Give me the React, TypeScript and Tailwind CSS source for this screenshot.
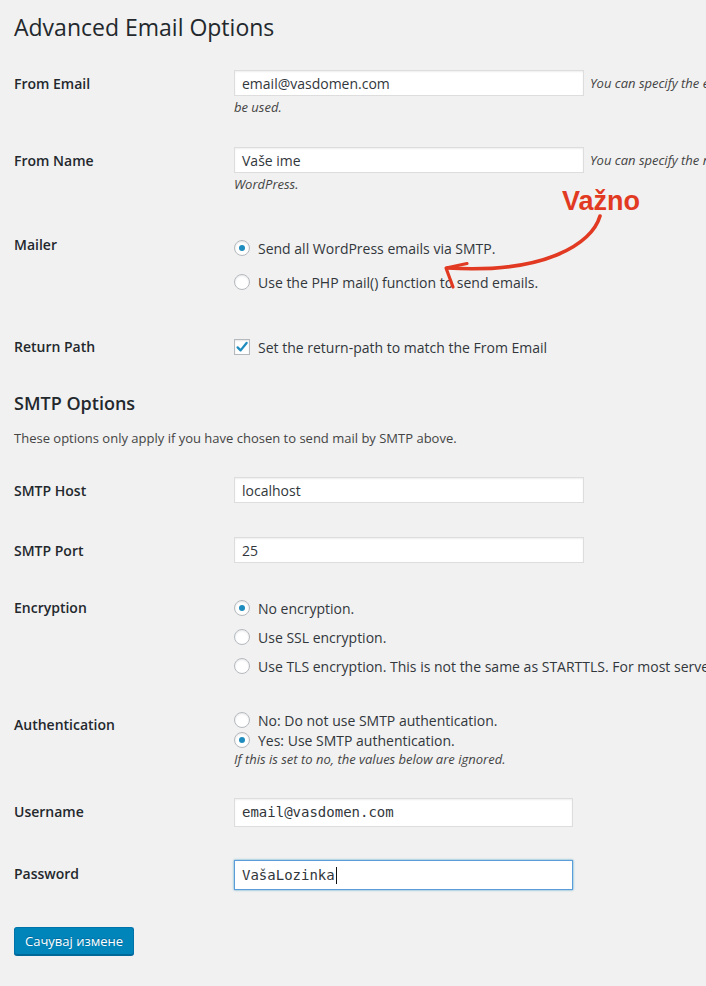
import type { ReactNode } from 'react';

// WP admin settings screen: Advanced Email Options / SMTP Options

const label =
  "w-[220px] shrink-0 text-[14px] leading-[20px] font-semibold text-[#23282d]";

function Row({
  name,
  pad = 'pt-0',
  className,
  children,
}: {
  name: string;
  pad?: string;
  className: string;
  children: ReactNode;
}) {
  return (
    <div className={`flex ${className}`}>
      <div className={`${label} ${pad}`}>{name}</div>
      <div className="min-w-0">{children}</div>
    </div>
  );
}

function TextInput({
  value,
  mono,
  focused,
  width = 'w-[350px]',
  height = 'h-[26px]',
}: {
  value: string;
  mono?: boolean;
  focused?: boolean;
  width?: string;
  height?: string;
}) {
  return (
    <div
      className={`${width} ${height} shrink-0 flex items-center bg-white px-[7px] border ${
        focused
          ? 'border-[#5b9dd9] shadow-[0_0_2px_rgba(30,140,190,0.8)]'
          : 'border-[#dddddd] shadow-[inset_0_1px_2px_rgba(0,0,0,0.07)]'
      } ${
        mono
          ? "font-['DejaVu_Sans_Mono',monospace] text-[14px]"
          : 'text-[14px]'
      } text-[#32373c] whitespace-nowrap`}
    >
      {value}
      {focused && <span className="ml-[1px] w-[1px] h-[17px] bg-[#111]" />}
    </div>
  );
}

function Radio({ checked, children }: { checked?: boolean; children: ReactNode }) {
  return (
    <div className="flex h-[20px] items-center whitespace-nowrap text-[14px] text-[#32373c]">
      <span className="mr-[8px] flex h-[16px] w-[16px] shrink-0 items-center justify-center rounded-full border border-[#b4b9be] bg-white shadow-[inset_0_1px_2px_rgba(0,0,0,0.1)]">
        {checked && <span className="h-[6px] w-[6px] rounded-full bg-[#1e8cbe]" />}
      </span>
      {children}
    </div>
  );
}

function Checkbox({ children }: { children: ReactNode }) {
  return (
    <div className="flex h-[20px] items-center whitespace-nowrap text-[14px] text-[#32373c]">
      <span className="mr-[8px] flex h-[16px] w-[16px] shrink-0 items-center justify-center border border-[#b4b9be] bg-white shadow-[inset_0_1px_2px_rgba(0,0,0,0.1)]">
        <svg width="14" height="14" viewBox="0 0 14 14">
          <path
            d="M2.6 7.4 L5.6 10.4 L11.6 3"
            fill="none"
            stroke="#1e8cbe"
            strokeWidth="2.3"
            strokeLinecap="round"
            strokeLinejoin="round"
          />
        </svg>
      </span>
      {children}
    </div>
  );
}

function Note({ children, className = '' }: { children: ReactNode; className?: string }) {
  return (
    <div className={`text-[13px] leading-[18px] italic text-[#444] whitespace-nowrap ${className}`}>
      {children}
    </div>
  );
}

export default function App() {
  return (
    <div className="relative w-[706px] h-[986px] overflow-hidden bg-[#f1f1f1] pl-[14px] font-['Open_Sans',sans-serif]">
      <h1 className="pt-[13px] text-[23px] leading-[29px] font-normal text-[#23282d]">
        Advanced Email Options
      </h1>

      <Row name="From Email" pad="pt-[4px]" className="mt-[28px]">
        <div className="flex items-center">
          <TextInput value="email@vasdomen.com" />
          <Note className="ml-[6px]">
            You can specify the email address that emails should be sent from. If you leave this blank, the default email will
          </Note>
        </div>
        <Note className="mt-[2px]">be used.</Note>
      </Row>

      <Row name="From Name" pad="pt-[4px]" className="mt-[31px]">
        <div className="flex items-center">
          <TextInput value="Vaše ime" />
          <Note className="ml-[6px]">
            You can specify the name that emails should be sent from. If you leave this blank, the emails will be sent from
          </Note>
        </div>
        <Note className="mt-[2px]">WordPress.</Note>
      </Row>

      <Row name="Mailer" className="mt-[42px]">
        <div className="flex flex-col gap-[14px] pt-[3px]">
          <Radio checked>Send all WordPress emails via SMTP.</Radio>
          <Radio>Use the PHP mail() function to send emails.</Radio>
        </div>
      </Row>

      <Row name="Return Path" className="mt-[45px]">
        <Checkbox>Set the return-path to match the From Email</Checkbox>
      </Row>

      <h2 className="mt-[34px] text-[18px] leading-[24px] font-semibold text-[#23282d]">
        SMTP Options
      </h2>
      <p className="mt-[14px] text-[13px] leading-[18px] text-[#444]">
        These options only apply if you have chosen to send mail by SMTP above.
      </p>

      <Row name="SMTP Host" pad="pt-[4px]" className="mt-[30px]">
        <TextInput value="localhost" />
      </Row>

      <Row name="SMTP Port" pad="pt-[4px]" className="mt-[34px]">
        <TextInput value="25" />
      </Row>

      <Row name="Encryption" className="mt-[35px]">
        <div className="flex flex-col gap-[9px]">
          <Radio checked>No encryption.</Radio>
          <Radio>Use SSL encryption.</Radio>
          <Radio>
            Use TLS encryption. This is not the same as STARTTLS. For most servers SSL is the recommended option.
          </Radio>
        </div>
      </Row>

      <Row name="Authentication" pad="pt-[5px]" className="mt-[34px]">
        <div className="flex flex-col">
          <Radio>No: Do not use SMTP authentication.</Radio>
          <Radio checked>Yes: Use SMTP authentication.</Radio>
          <Note>If this is set to no, the values below are ignored.</Note>
        </div>
      </Row>

      <Row name="Username" pad="pt-[4px]" className="mt-[30px]">
        <TextInput value="email@vasdomen.com" mono width="w-[339px]" height="h-[29px]" />
      </Row>

      <Row name="Password" pad="pt-[4px]" className="mt-[33px]">
        <TextInput value="VašaLozinka" mono focused width="w-[339px]" height="h-[30px]" />
      </Row>

      <button className="mt-[37px] h-[28px] rounded-[3px] border border-[#0073aa] border-b-[#006799] bg-[#0085ba] px-[10px] text-[13px] leading-[26px] text-white shadow-[0_1px_0_#006799] [text-shadow:0_-1px_1px_#006799]">
        Сачувај измене
      </button>

      {/* hand-drawn callout */}
      <div className="absolute left-[562px] top-[188px] text-[27px] leading-[27px] font-bold text-[#e23a22] font-['Liberation_Sans',Arial,sans-serif]">
        Važno
      </div>
      <svg
        className="pointer-events-none absolute left-0 top-0"
        width="706"
        height="300"
        viewBox="0 0 706 300"
      >
        <path
          d="M600 216 C 592 244 545 274 447 268"
          fill="none"
          stroke="#e23a22"
          strokeWidth="3.6"
          strokeLinecap="round"
        />
        <path
          d="M467 263.5 L446 268 L453 287"
          fill="none"
          stroke="#e23a22"
          strokeWidth="3.2"
          strokeLinecap="round"
          strokeLinejoin="round"
        />
      </svg>
    </div>
  );
}
